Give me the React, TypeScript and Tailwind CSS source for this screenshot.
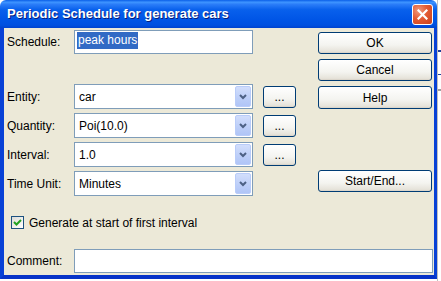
import React from "react"

const font = { fontFamily: '"Liberation Sans", Arial, sans-serif' }

function XpButton({ label, className }: { label: string; className: string }) {
    return (
        <button
            className={
                "flex items-center justify-center rounded-[3px] border border-[#003C74] bg-[linear-gradient(to_bottom,#FFFFFF_0%,#F4F4F0_60%,#E6E3DA_92%,#D6D0C5_100%)] text-[12px] leading-none text-black " +
                className
            }
        >
            {label}
        </button>
    )
}

function Combo({ value }: { value: string }) {
    return (
        <div className="flex h-[25px] w-[179px] items-center border border-[#7F9DB9] bg-white">
            <span className="flex-1 pl-[4px] text-[12px] leading-none text-black">{value}</span>
            <div className="mr-[1px] flex h-[21px] w-[16px] items-center justify-center rounded-[2px] border border-[#B9CCF9] bg-[linear-gradient(to_bottom,#D2DEFC_0%,#BCCEF8_60%,#B0C5F7_100%)]">
                <svg width="8" height="6" viewBox="0 0 8 6">
                    <path d="M1 1 L4 4 L7 1" fill="none" stroke="#4D6185" strokeWidth="2" />
                </svg>
            </div>
        </div>
    )
}

function FormRow({ label, value, dots }: { label: string; value: string; dots: boolean }) {
    return (
        <div className="flex h-[25px] items-center">
            <span className="w-[67px] text-[12px] leading-none text-black">{label}</span>
            <Combo value={value} />
            {dots && <XpButton label="..." className="ml-[10px] h-[22px] w-[33px]" />}
        </div>
    )
}

export default function App() {
    return (
        <div className="flex h-[281px] w-[441px] bg-white" style={font}>
            <div className="flex h-[279px] w-[437px] flex-col">
                {/* title bar */}
                <div className="flex h-[28px] items-center rounded-t-[6px] bg-[linear-gradient(to_bottom,#0A5FE8_0%,#3E94FF_8%,#2A7CF8_16%,#0860EC_35%,#0055E6_70%,#0050E0_90%,#0043CF_100%)] pl-[7px] pr-[4px]">
                    <span className="flex-1 text-[13px] font-bold text-white [text-shadow:1px_1px_0_#0A1E7A]">
                        Periodic Schedule for generate cars
                    </span>
                    <div className="flex h-[21px] w-[21px] items-center justify-center rounded-[3px] border border-white bg-[radial-gradient(circle_at_30%_30%,#F09A7E_0%,#E35A33_45%,#C9401C_100%)]">
                        <svg width="11" height="11" viewBox="0 0 11 11">
                            <path d="M1.5 1.5 L9.5 9.5 M9.5 1.5 L1.5 9.5" stroke="white" strokeWidth="2.2" strokeLinecap="square" />
                        </svg>
                    </div>
                </div>
                {/* body */}
                <div className="flex flex-1 flex-col border-x-4 border-b-4 border-r-[3px] border-[#0841D6] border-b-[#0733C8] bg-[#ECE9D8] pl-[3px] pr-[1px]">
                    <div className="flex">
                        <div className="flex w-[289px] flex-col">
                            <div className="mt-[2px] flex h-[24px] items-center">
                                <span className="w-[67px] text-[12px] leading-none text-black">Schedule:</span>
                                <div className="flex h-[24px] w-[179px] items-start border border-[#7F9DB9] bg-white pl-[2px] pt-[1px]">
                                    <span className="h-[17px] bg-[#316AC5] px-[1px] text-[12px] leading-[17px] text-white">peak hours</span>
                                </div>
                            </div>
                            <div className="mt-[30px] flex flex-col gap-[4px]">
                                <FormRow label="Entity:" value="car" dots />
                                <FormRow label="Quantity:" value="Poi(10.0)" dots />
                                <FormRow label="Interval:" value="1.0" dots />
                                <FormRow label="Time Unit:" value="Minutes" dots={false} />
                            </div>
                        </div>
                        <div className="ml-[22px] flex w-[114px] flex-col">
                            <XpButton label="OK" className="mt-[4px] h-[22px] w-full" />
                            <XpButton label="Cancel" className="mt-[5px] h-[22px] w-full" />
                            <XpButton label="Help" className="mt-[5px] h-[23px] w-full" />
                            <XpButton label="Start/End..." className="mt-[61px] h-[22px] w-full" />
                        </div>
                    </div>
                    <div className="mt-[20px] flex h-[13px] items-center pl-[4px]">
                        <div className="flex h-[13px] w-[13px] items-center justify-center border border-[#1C5180] bg-[linear-gradient(135deg,#DCDCD7_0%,#FFFFFF_100%)]">
                            <svg width="9" height="9" viewBox="0 0 9 9">
                                <path d="M1 4 L3.5 6.5 L8 2" fill="none" stroke="#21A121" strokeWidth="2" />
                            </svg>
                        </div>
                        <span className="ml-[5px] text-[12px] leading-none text-black">Generate at start of first interval</span>
                    </div>
                    <div className="mt-[20px] flex h-[24px] items-center">
                        <span className="w-[67px] text-[12px] leading-none text-black">Comment:</span>
                        <div className="h-[24px] flex-1 border border-[#7F9DB9] bg-white" />
                    </div>
                </div>
            </div>
            {/* sliver of the window behind */}
            <div className="flex w-[4px] flex-col border-l border-[#C0C0C0] bg-white">
                <div className="mt-[50px] h-[2px] bg-[#1E3F9A]" />
                <div className="mt-[22px] h-[1px] bg-[#1E3F9A]" />
                <div className="mt-[14px] h-[2px] bg-[#A0A0A0]" />
            </div>
        </div>
    )
}
